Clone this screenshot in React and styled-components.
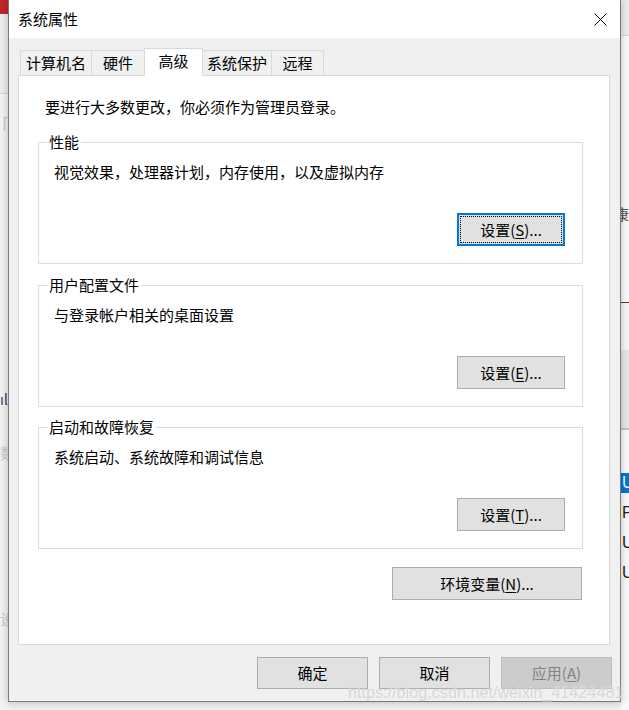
import React from "react";
import styled, { createGlobalStyle } from "styled-components";

const GlobalStyle = createGlobalStyle`
  html, body {
    margin: 0;
    padding: 0;
    background: #f0f0f0;
  }
  body {
    font-family: "Noto Sans CJK SC", "Noto Sans", sans-serif;
    font-size: 15px;
    color: #000;
    overflow: hidden;
  }
`;

const tabs = ["计算机名", "硬件", "高级", "系统保护", "远程"];
const tabWidths = [72, 54, 59, 70, 53];

const groups = [
  { title: "性能", text: "视觉效果，处理器计划，内存使用，以及虚拟内存", key: "S", focused: true },
  { title: "用户配置文件", text: "与登录帐户相关的桌面设置", key: "E" },
  { title: "启动和故障恢复", text: "系统启动、系统故障和调试信息", key: "T" },
];

const CloseIcon = () => (
  <svg width="13" height="13" viewBox="0 0 13 13">
    <path d="M0.5 0.5 L12.5 12.5 M12.5 0.5 L0.5 12.5" stroke="#000" strokeWidth="1" fill="none" />
  </svg>
);

const App = () => {
  return (
    <Desktop>
      <GlobalStyle />
      <LeftStrip>
        <div className="red" />
        <div className="head" />
        <Ghost $top={20} $color="#c8c8c8">卩</Ghost>
        <Ghost $top={258} $color="#3a4a6a">ılı</Ghost>
        <Ghost $top={36} $color="#c8c8c8">数</Ghost>
        <Ghost $top={148} $color="#c8c8c8">设</Ghost>
      </LeftStrip>

      <Dialog>
        <TitleBar>
          <span>系统属性</span>
          <CloseButton>
            <CloseIcon />
          </CloseButton>
        </TitleBar>

        <TabRow>
          {tabs.map((t, i) => (
            <Tab key={t} $active={t === "高级"} style={{ width: tabWidths[i] }}>
              {t}
            </Tab>
          ))}
        </TabRow>

        <Panel>
          <Intro>要进行大多数更改，你必须作为管理员登录。</Intro>

          <Groups>
            {groups.map((g) => (
              <Group key={g.title}>
                <legend>{g.title}</legend>
                <GroupText>{g.text}</GroupText>
                <ButtonRow>
                  <Button $focused={g.focused} $width={108}>
                    设置(<u>{g.key}</u>)...
                  </Button>
                </ButtonRow>
              </Group>
            ))}
          </Groups>

          <EnvRow>
            <Button $width={190}>
              环境变量(<u>N</u>)...
            </Button>
          </EnvRow>
        </Panel>

        <Footer>
          <Button $width={111} $height={32}>确定</Button>
          <Button $width={111} $height={32}>取消</Button>
          <Button $width={111} $height={32} disabled>
            应用(<u>A</u>)
          </Button>
        </Footer>
      </Dialog>

      <RightStrip>
        <div className="top" />
        <div className="white">
          <span>康</span>
        </div>
        <div className="redline" />
        <div className="gap" />
        <div className="band" />
        <div className="list">
          <Row $selected>U</Row>
          <Row>P</Row>
          <Row>U</Row>
          <Row>U</Row>
        </div>
      </RightStrip>

      <Watermark>https://blog.csdn.net/weixin_41424481</Watermark>
    </Desktop>
  );
};

export default App;

const Desktop = styled.div`
  position: relative;
  display: flex;
  width: 629px;
  height: 710px;
  overflow: hidden;
  background: #f0f0f0;
`;

const LeftStrip = styled.div`
  width: 8px;
  flex-shrink: 0;
  display: flex;
  flex-direction: column;
  overflow: hidden;
  background: #f3f3f3;

  .red {
    height: 14px;
    background: #c1272d;
  }

  .head {
    height: 79px;
    background: #eeeeee;
    border-bottom: 1px solid #d6d6d6;
  }
`;

const Ghost = styled.div`
  margin-top: ${(p) => p.$top}px;
  font-size: 15px;
  line-height: 18px;
  white-space: nowrap;
  color: ${(p) => p.$color};
`;

const RightStrip = styled.div`
  width: 8px;
  flex-shrink: 0;
  display: flex;
  flex-direction: column;
  overflow: hidden;
  background: #fafafa;

  .top {
    height: 35px;
    background: #ececec;
    border-bottom: 1px solid #d4d4d4;
  }

  .white {
    height: 266px;
    background: #fbfbfb;
    padding-top: 168px;
    box-sizing: border-box;
    font-size: 15px;
    line-height: 20px;
    color: #555;
    white-space: nowrap;

    span {
      margin-left: -7px;
    }
  }

  .redline {
    height: 1px;
    background: #8a2a2a;
  }

  .gap {
    height: 47px;
    background: #f7f7f7;
  }

  .band {
    height: 78px;
    background: #e6e6e6;
    border-bottom: 2px solid #c4c4c4;
  }

  .list {
    flex: 1;
    padding-top: 43px;
    background: #fafafa;
  }
`;

const Row = styled.div`
  height: 20px;
  margin-bottom: 10px;
  font-family: "Liberation Sans", Arial, sans-serif;
  font-size: 16px;
  line-height: 20px;
  padding-left: 1px;
  color: ${(p) => (p.$selected ? "#fff" : "#222")};
  background: ${(p) => (p.$selected ? "#0078d7" : "transparent")};
`;

const Dialog = styled.div`
  width: 613px;
  height: 702px;
  flex-shrink: 0;
  box-sizing: border-box;
  display: flex;
  flex-direction: column;
  background: #f0f0f0;
  border: 1px solid #7a7a7a;
  border-top: none;
  box-shadow: 0 0 8px rgba(0, 0, 0, 0.25);
  z-index: 1;
`;

const TitleBar = styled.div`
  height: 38px;
  flex-shrink: 0;
  display: flex;
  align-items: center;
  justify-content: space-between;
  padding: 0 13px 0 9px;
  background: #fff;
  font-size: 15px;
  line-height: 20px;
`;

const CloseButton = styled.div`
  display: flex;
  align-items: center;
  justify-content: center;
  width: 14px;
  height: 14px;
  margin-top: 1px;
`;

const TabRow = styled.div`
  display: flex;
  align-items: flex-end;
  padding: 10px 0 0 11px;
`;

const Tab = styled.div`
  box-sizing: border-box;
  height: ${(p) => (p.$active ? 28 : 25)}px;
  margin-bottom: ${(p) => (p.$active ? -1 : 0)}px;
  margin-left: -1px;
  border: 1px solid #d9d9d9;
  border-bottom: none;
  background: ${(p) => (p.$active ? "#fff" : "#f0f0f0")};
  position: ${(p) => (p.$active ? "relative" : "static")};
  z-index: ${(p) => (p.$active ? 2 : "auto")};
  display: flex;
  align-items: center;
  justify-content: center;
  padding-bottom: ${(p) => (p.$active ? 4 : 0)}px;
  font-size: 15px;
  line-height: 20px;

  &:first-child {
    margin-left: 0;
  }
`;

const Panel = styled.div`
  margin: 0 10px 0 9px;
  box-sizing: border-box;
  background: #fff;
  border: 1px solid #d9d9d9;
  padding: 21px 26px 44px 19px;
`;

const Intro = styled.div`
  margin-left: 7px;
  font-size: 15px;
  line-height: 20px;
`;

const Groups = styled.div`
  display: flex;
  flex-direction: column;
  margin-top: 15px;
`;

const Group = styled.fieldset`
  margin: 0;
  padding: 0 17px 17px 15px;
  border: 1px solid #dcdcdc;
  min-width: 0;

  & + & {
    margin-top: 10px;
  }

  &:nth-child(2) {
    margin-top: 11px;
  }

  legend {
    margin-left: -7px;
    padding: 0 2px;
    font-size: 15px;
    line-height: 20px;
  }
`;

const GroupText = styled.div`
  margin-top: 10px;
  font-size: 15px;
  line-height: 20px;
`;

const ButtonRow = styled.div`
  display: flex;
  justify-content: flex-end;
  margin-top: 31px;
`;

const EnvRow = styled.div`
  display: flex;
  justify-content: flex-end;
  margin-top: 18px;
  padding-right: 1px;
`;

const Button = styled.button`
  box-sizing: border-box;
  width: ${(p) => p.$width}px;
  height: ${(p) => p.$height || 33}px;
  padding: 0;
  font-family: "Noto Sans CJK SC", "Noto Sans", sans-serif;
  font-size: 15px;
  line-height: 20px;
  color: #000;
  background: #e1e1e1;
  border: ${(p) => (p.$focused ? "2px solid #0078d7" : "1px solid #adadad")};
  outline: ${(p) => (p.$focused ? "1px dotted #000" : "none")};
  outline-offset: -4px;

  u {
    text-decoration-thickness: 1px;
    text-underline-offset: 2px;
  }

  &:disabled {
    background: #cccccc;
    border-color: #bfbfbf;
    color: #838383;
  }
`;

const Footer = styled.div`
  display: flex;
  justify-content: flex-end;
  gap: 11px;
  margin-top: 12px;
  padding-right: 8px;
`;

const Watermark = styled.div`
  position: absolute;
  left: 348px;
  top: 681px;
  z-index: 3;
  font-family: "Liberation Sans", Arial, sans-serif;
  font-size: 16.2px;
  line-height: 22px;
  white-space: nowrap;
  color: rgba(200, 200, 200, 0.75);
  text-shadow: 0 0 1px rgba(255, 255, 255, 0.9);
  pointer-events: none;
`;
